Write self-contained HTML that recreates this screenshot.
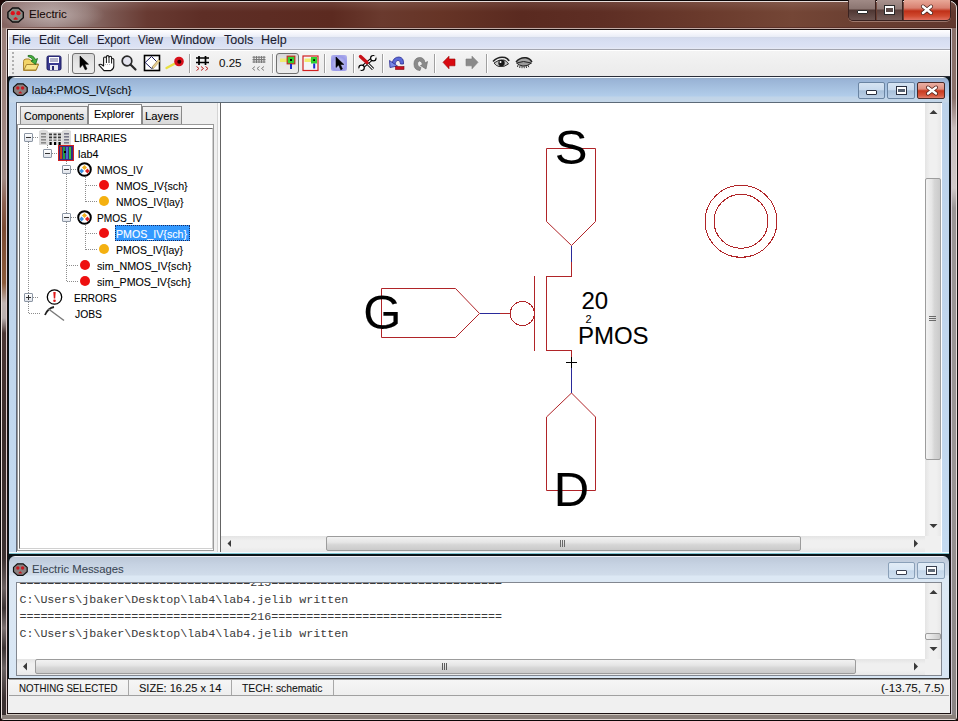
<!DOCTYPE html>
<html><head><meta charset="utf-8">
<style>
*{margin:0;padding:0;box-sizing:border-box}
html,body{width:958px;height:721px;overflow:hidden;background:#1e0806;font-family:"Liberation Sans",sans-serif;font-size:12px;color:#000}
.a{position:absolute}
.t{position:absolute;white-space:nowrap;line-height:1;-webkit-text-stroke:.08px currentColor}
svg{position:absolute;overflow:visible}
.menu{top:34.2px;font-size:12px;color:#1c1c30;transform-origin:0 0}
.sep{position:absolute;width:1px;background:#a0a0a0;border-right:1px solid #fff;width:2px}
.tb{font-size:11px;color:#000}
.tree{position:absolute;white-space:nowrap;line-height:1;-webkit-text-stroke:.08px currentColor;font-size:11px;color:#000;transform-origin:0 0}
.mono{font-family:"Liberation Mono",monospace;font-size:11.67px;color:#3a3a3a;position:absolute;white-space:pre;line-height:1}
.st{position:absolute;white-space:nowrap;line-height:1;-webkit-text-stroke:.08px currentColor;font-size:11px;color:#111;transform-origin:0 0}
</style></head><body>
<!-- window frame -->
<div class="a" style="left:0;top:0;width:958px;height:721px;border-radius:8px 8px 4px 4px;background:#9a8e8a;border:1px solid #0a0606"></div>
<div class="a" style="left:1px;top:1px;width:956px;height:719px;border-radius:7px 7px 3px 3px;border:1px solid rgba(240,228,226,.9)"></div>
<div class="a" style="left:2px;top:2px;width:954px;height:26px;border-radius:6px 6px 0 0;background:radial-gradient(ellipse 55px 16px at 48px 13px,rgba(200,188,186,.75),rgba(200,188,186,0)),linear-gradient(90deg,#84625e 0,#8e7270 20px,#98807e 50px,#8a6e6a 85px,#7a5650 110px,#683a32 145px,#5e2e26 200px,#5c2a20 330px,#6a3a2e 380px,#663426 440px,#5a2a20 520px,#5e2e24 600px,#6a3a2c 700px,#744636 790px,#6c4032 850px,#62382e 954px)"></div>
<div class="a" style="left:2px;top:2px;width:954px;height:10px;border-radius:6px 6px 0 0;background:linear-gradient(rgba(255,255,255,.10),rgba(255,255,255,0))"></div>
<div class="a" style="left:2px;top:27px;width:954px;height:1px;background:linear-gradient(90deg,#8a6a64,#5a3028 150px,#5a3028 954px)"></div>
<div class="a" style="left:2px;top:28px;width:5px;height:690px;background:linear-gradient(#9a807a 0,#a08a84 150px,#8a6050 175px,#7a4a32 200px,#8a5a3a 255px,#c0b4b2 275px,#b8aeae 290px,#4a3634 305px,#3a2c2a 400px,#3a3030 530px,#6a6060 560px,#3a3232 580px,#7a7070 600px,#3a3232 620px,#6a6262 640px,#3a3030 670px,#3a3030 690px)"></div>
<div class="a" style="left:6px;top:28px;width:1px;height:687px;background:#dccccc"></div>
<div class="a" style="left:951px;top:28px;width:1px;height:687px;background:#d0c8d4"></div>
<div class="a" style="left:952px;top:28px;width:4px;height:690px;background:linear-gradient(#8a706a 0,#8a706a 70px,#c8bcbc 100px,#d0c8c8 160px,#9a9494 180px,#9a9494 450px,#8a8484 690px)"></div>
<div class="a" style="left:2px;top:715px;width:954px;height:4px;background:#8a807a"></div>
<div class="a" style="left:6px;top:714px;width:946px;height:1px;background:#d0c8c0"></div>
<div class="a" style="left:6px;top:28px;width:946px;height:1px;background:#c4aca6"></div>
<!-- app icon -->
<svg style="left:7px;top:7px" width="18" height="16" viewBox="0 0 18 16">
<path d="M5.5 1h6l4.8 4.2v5.6L11.5 15h-6L0.9 10.8V5.2z" fill="#8a8a84" stroke="#111" stroke-width="1.4" stroke-linejoin="round"/>
<circle cx="5.8" cy="6.2" r="2.1" fill="#e0101a"/><circle cx="11.4" cy="6.2" r="2.1" fill="#e0101a"/>
<path d="M6.8 12.2 Q8.6 8.8 10.4 12.2z" fill="#e0101a" stroke="#e0101a" stroke-width="1"/>
</svg>
<div class="t" style="left:29.4px;top:8.6px;font-size:11.3px;color:#180a08;transform:scaleX(1.02);transform-origin:0 0">Electric</div>
<!-- caption buttons -->
<div class="a" style="left:848px;top:0px;width:103px;height:21px;border-radius:0 0 5px 5px;border:1px solid #3a2220;border-top:none;overflow:hidden;box-shadow:0 1px 0 rgba(255,230,220,.35)">
  <div class="a" style="left:0;top:0;width:27px;height:20px;background:linear-gradient(#a08a86 0,#8a7470 45%,#4e3632 50%,#6c5450 100%);border-right:1px solid #3a2220"></div>
  <div class="a" style="left:28px;top:0;width:26px;height:20px;background:linear-gradient(#a8928e 0,#907a76 45%,#5a403c 50%,#765e5a 100%);border-right:1px solid #3a2220"></div>
  <div class="a" style="left:55px;top:0;width:48px;height:20px;background:linear-gradient(#e8a898 0,#d88070 40%,#c03018 55%,#d04a30 80%,#e07060 100%)"></div>
</div>
<div class="a" style="left:857px;top:10px;width:11px;height:4px;background:#fff;border:1px solid #2a2a2a;border-radius:1px"></div>
<div class="a" style="left:884px;top:5px;width:11px;height:10px;background:#fff;border:1px solid #2a2a2a"></div>
<div class="a" style="left:886px;top:8px;width:7px;height:4px;background:#5a4a48"></div>
<svg style="left:921px;top:5px" width="12" height="10" viewBox="0 0 12 10"><path d="M2 1.5 L10 8 M10 1.5 L2 8" stroke="#3a1a14" stroke-width="4" stroke-linecap="round"/><path d="M2 1.5 L10 8 M10 1.5 L2 8" stroke="#fff" stroke-width="2.6" stroke-linecap="round"/></svg>

<!-- client -->
<div class="a" style="left:7px;top:29px;width:944px;height:685px;background:#f0f0f0;border:1px solid #1a1010"></div>
<!-- menubar -->
<div class="a" style="left:8px;top:30px;width:942px;height:20px;background:linear-gradient(#ffffff 0,#f4f5fb 4px,#e8ecf6 7px,#d2d8e6 7px,#d4dbee 8px,#d8dff2 12px,#dce2f4 17px,#e6e9f4 19px);border-bottom:1px solid #a4a6b0;border-left:1px solid #fff"></div>
<div class="t menu" style="left:11.7px;transform:scaleX(0.972)">File</div>
<div class="t menu" style="left:38.5px;transform:scaleX(1.01)">Edit</div>
<div class="t menu" style="left:68.0px;transform:scaleX(0.974)">Cell</div>
<div class="t menu" style="left:96.9px;transform:scaleX(0.949)">Export</div>
<div class="t menu" style="left:138.1px;transform:scaleX(0.961)">View</div>
<div class="t menu" style="left:171.2px;transform:scaleX(1.031)">Window</div>
<div class="t menu" style="left:224.2px;transform:scaleX(1.044)">Tools</div>
<div class="t menu" style="left:260.5px;transform:scaleX(1.039)">Help</div>
<!-- toolbar -->
<div class="a" style="left:8px;top:50px;width:942px;height:27px;background:linear-gradient(#f4f4f4,#efefef 50%,#ebebeb);border-bottom:1px solid #2a2e38;border-left:1px solid #fff"></div>
<div class="a" style="left:9px;top:50px;width:941px;height:1px;background:#fff"></div>
<!-- grip -->
<div class="a" style="left:12px;top:52px;width:2px;height:22px;background:repeating-linear-gradient(#b0b0b0 0 2px,transparent 2px 4px)"></div>
<!-- open folder -->
<svg style="left:22px;top:54px" width="18" height="18" viewBox="0 0 18 18">
<path d="M1.5 7.5 Q1.5 5 4 5 L7 5 L9 6.5 L13 6.5 L13 10 L16.5 10 L14 16.5 L1.5 16.5z" fill="#f2d468" stroke="#a88432" stroke-width="1"/>
<path d="M2 16 L4.5 10.5 L16.5 10.5 L14 16z" fill="#f8e488" stroke="#a88432" stroke-width="1"/>
<path d="M6 1.5 Q11 0.5 13.5 5.5 L15.5 4.5 L13.5 10.5 L9 7 L11 6.3 Q9.5 3 6 2.5z" fill="#48b040" stroke="#1e6a1e" stroke-width=".8"/>
</svg>
<!-- save -->
<svg style="left:46px;top:55px" width="16" height="16" viewBox="0 0 16 16">
<rect x="1" y="1" width="14" height="14" rx="1.5" fill="#3a3a90" stroke="#1a1a60"/>
<rect x="3" y="2" width="10" height="6" fill="#fff"/><rect x="4" y="3.5" width="8" height="1" fill="#6a6a9a"/><rect x="4" y="5.5" width="8" height="1" fill="#6a6a9a"/>
<rect x="4" y="10" width="8" height="5" fill="#e8e8f0"/><rect x="6" y="11" width="2" height="4" fill="#2a2a70"/>
</svg>
<div class="sep" style="left:68px;top:54px;height:19px"></div>
<!-- pressed select button -->
<div class="a" style="left:72px;top:53px;width:23px;height:21px;border:1px solid #707070;border-radius:3px;background:linear-gradient(#d8d8d8,#e6e6e6 50%,#ececec)"></div>
<svg style="left:79px;top:55px" width="11" height="16" viewBox="0 0 11 16">
<path d="M1 1 L1 12.5 L3.8 9.8 L6.2 14.8 L8 14 L5.8 9.2 L9.5 9.2z" fill="#000" stroke="#000" stroke-width=".6"/>
</svg>
<!-- hand -->
<svg style="left:98px;top:55px" width="17" height="17" viewBox="0 0 17 17">
<path d="M0.8 9.8 Q2.2 8.6 4.2 10 L5.6 11 V3.6 Q5.6 2 7 2 Q8.4 2 8.4 3.6 V1.8 Q8.4 0.6 9.7 0.6 Q11 0.6 11 1.8 V2.4 Q11 1.3 12.3 1.3 Q13.6 1.3 13.6 2.4 V4.6 Q13.6 3.5 14.7 3.5 Q15.8 3.5 15.8 4.6 V11 Q15.8 14.2 12.8 15.6 H6 Z" fill="#fff" stroke="#111" stroke-width="1.05" stroke-linejoin="round"/>
<path d="M8.4 3.6 V8 M11 2.4 V8 M13.6 4.6 V8.5" stroke="#111" stroke-width="1"/>
<path d="M7 9.5 H13" stroke="#aaa" stroke-width=".8" stroke-dasharray="1 1"/>
</svg>
<!-- magnifier -->
<svg style="left:120px;top:54px" width="17" height="17" viewBox="0 0 17 17">
<circle cx="7" cy="7" r="4.8" fill="#e4e4ee" stroke="#2a2a2a" stroke-width="1.7"/>
<path d="M10.5 10.5 L15.5 15.5" stroke="#2a2a2a" stroke-width="2.2" stroke-linecap="round"/>
</svg>
<!-- box/pencil -->
<svg style="left:143px;top:54px" width="18" height="18" viewBox="0 0 18 18">
<rect x="1.5" y="1.5" width="15" height="15" fill="#fff" stroke="#000" stroke-width="1.6"/>
<path d="M2.2 8.5 L8.5 2.5 L14 8 L8.5 14.5z" fill="none" stroke="#1a1a5a" stroke-width="1"/>
<path d="M9 13 L15.5 5.5 L17 7 L10.5 14.5z" fill="#e8d090" stroke="#b09860" stroke-width=".6"/>
<path d="M9 13 L10.5 14.5 L8.2 15.2z" fill="#707070"/>
</svg>
<!-- probe -->
<svg style="left:165px;top:55px" width="20" height="15" viewBox="0 0 20 15">
<path d="M1.5 13 L10 8.5" stroke="#e8e040" stroke-width="2.4" stroke-linecap="round"/>
<circle cx="14" cy="6.5" r="4.8" fill="#d8101a"/><circle cx="14.3" cy="6.8" r="2" fill="#300"/>
</svg>
<div class="sep" style="left:189px;top:54px;height:19px"></div>
<!-- grid -->
<svg style="left:195px;top:55px" width="16" height="17" viewBox="0 0 16 17">
<path d="M4 1 V10 M10.5 1 V10 M1 3 H14 M1 7.5 H14" stroke="#000" stroke-width="1.7"/>
<path d="M1.5 11.5 L4 13.5 L1.5 15.5 M6 11.5 L8.5 13.5 L6 15.5 M10.5 11.5 L13 13.5 L10.5 15.5" fill="none" stroke="#c02020" stroke-width="1"/>
</svg>
<div class="t" style="left:219.2px;top:57.8px;font-size:11px;color:#111;transform:scaleX(1.053);transform-origin:0 0">0.25</div>
<svg style="left:251px;top:55px" width="16" height="17" viewBox="0 0 16 17">
<path d="M3 1 V8 M5.5 1 V8 M8 1 V8 M10.5 1 V8 M13 1 V8 M1.5 2.2 H14.5 M1.5 4.6 H14.5 M1.5 7 H14.5" stroke="#7a7a7a" stroke-width="1.1"/>
<path d="M4 11.5 L1.5 13.5 L4 15.5 M8.5 11.5 L6 13.5 L8.5 15.5 M13 11.5 L10.5 13.5 L13 15.5" fill="none" stroke="#808080" stroke-width="1"/>
</svg>
<div class="sep" style="left:272px;top:54px;height:19px"></div>
<!-- pressed port button -->
<div class="a" style="left:276px;top:53px;width:23px;height:21px;border:1px solid #707070;border-radius:3px;background:linear-gradient(#d8d8d8,#e6e6e6 50%,#ececec)"></div>
<svg style="left:279px;top:55px" width="18" height="16" viewBox="0 0 18 16">
<rect x="1" y="3.5" width="8" height="3.5" fill="#f0ec70"/>
<rect x="8.2" y="1.2" width="7.6" height="7.6" fill="#30d030" stroke="#c03020" stroke-width="1.2"/>
<rect x="11" y="4" width="2" height="2" fill="#000"/>
<rect x="11" y="9" width="2" height="5" fill="#1a2ad0"/>
</svg>
<svg style="left:302px;top:55px" width="17" height="16" viewBox="0 0 17 16">
<rect x="1" y="1" width="15" height="14.5" fill="#f4f4f8" stroke="#d02020" stroke-width="1.2"/>
<rect x="2.5" y="3.5" width="7" height="3.5" fill="#f0ec70"/>
<rect x="9" y="2" width="6" height="6.5" fill="#30d030"/>
<rect x="11.2" y="4.2" width="1.8" height="1.8" fill="#000"/>
<rect x="11.2" y="8.5" width="2" height="5" fill="#1a2ad0"/>
</svg>
<div class="sep" style="left:324px;top:54px;height:19px"></div>
<!-- highlighted select -->
<div class="a" style="left:331px;top:55px;width:16px;height:16px;background:radial-gradient(circle at 50% 55%,#d8d8f8 0,#9a9ae8 60%,#b8b8ee 100%);border-radius:2px"></div>
<svg style="left:335px;top:56px" width="10" height="15" viewBox="0 0 10 15">
<path d="M1 1 L1 11.5 L3.6 9 L5.8 13.8 L7.4 13 L5.4 8.4 L8.8 8.4z" fill="#000" stroke="#000" stroke-width=".6"/>
</svg>
<div class="sep" style="left:353px;top:54px;height:19px"></div>
<!-- tools -->
<svg style="left:358px;top:55px" width="19" height="16" viewBox="0 0 19 16">
<path d="M14.5 3.5 L4.5 12" stroke="#000" stroke-width="3.4" stroke-linecap="round"/>
<path d="M14.5 3.5 L4.5 12" stroke="#fff" stroke-width="1.4" stroke-linecap="round"/>
<circle cx="15.3" cy="3.2" r="2.7" fill="#fff" stroke="#000" stroke-width="1.2"/>
<circle cx="3.6" cy="12.8" r="2.7" fill="#fff" stroke="#000" stroke-width="1.2"/>
<path d="M16.5 0.5 L18.5 2.5" stroke="#efefef" stroke-width="2"/>
<path d="M0.5 13.5 L2.5 15.5" stroke="#efefef" stroke-width="2"/>
<path d="M9.5 8.5 L15 14" stroke="#000" stroke-width="3"/>
<path d="M9.8 8.8 L14.8 13.8" stroke="#fff" stroke-width="1.2"/>
<path d="M2.5 1.5 L9 7.5" stroke="#c81018" stroke-width="3.4" stroke-linecap="round"/>
</svg>
<div class="sep" style="left:382px;top:54px;height:19px"></div>
<!-- undo -->
<svg style="left:388px;top:55px" width="18" height="16" viewBox="0 0 18 16">
<path d="M4 9 Q5 2 11 2 Q16 2.5 15.5 9 L12.5 9 Q12.5 5.5 10 5.3 Q7.5 5.3 7 9.5z" fill="#5a6ad8" stroke="#2a2a90" stroke-width=".8"/>
<path d="M1.5 5.5 L9.5 11 L2 12.5z" fill="#7a8ae8" stroke="#2a2a90" stroke-width=".8"/>
<rect x="7.5" y="11.5" width="8.5" height="3" fill="#c81020" stroke="#7a0a10" stroke-width=".6"/>
</svg>
<!-- redo gray -->
<svg style="left:412px;top:55px" width="17" height="17" viewBox="0 0 17 17">
<path d="M2 9 Q2 3 7.5 2.5 Q12.5 2.5 13 8 L15.5 6.5 L14 14 L8.5 10.5 L10.5 9.5 Q10 6 7.5 6 Q5.5 6 5.5 9 Q5.5 12 9 12.5 L8 15.5 Q2 15 2 9z" fill="#8a8a8a" stroke="#707070" stroke-width=".7"/>
</svg>
<div class="sep" style="left:434px;top:54px;height:19px"></div>
<!-- arrows -->
<svg style="left:442px;top:55px" width="14" height="15" viewBox="0 0 14 15">
<path d="M1 7.3 L7 1.2 L7 4 L13 4 L13 10.8 L7 10.8 L7 13.8z" fill="#d80a10" stroke="#900" stroke-width=".6"/>
</svg>
<svg style="left:465px;top:55px" width="14" height="15" viewBox="0 0 14 15">
<path d="M13 7.3 L7 1.2 L7 4 L1 4 L1 10.8 L7 10.8 L7 13.8z" fill="#8a8a8a" stroke="#7a7a7a" stroke-width=".6"/>
</svg>
<div class="sep" style="left:486px;top:54px;height:19px"></div>
<!-- eyes -->
<svg style="left:492px;top:56px" width="18" height="13" viewBox="0 0 18 13">
<path d="M1 5.5 Q6 0 13 1.5 Q16 2.5 17 5" fill="none" stroke="#222" stroke-width="1.6"/>
<path d="M2 7 Q7 3 12 4 Q15 5 16.5 8 Q12 11.5 7 10.5 Q4 10 2 7z" fill="#c8c8c8" stroke="#333" stroke-width="1"/>
<circle cx="9.5" cy="7" r="3.2" fill="#1a1a1a"/><circle cx="8.5" cy="6" r="1" fill="#fff"/>
</svg>
<svg style="left:515px;top:56px" width="18" height="13" viewBox="0 0 18 13">
<path d="M1 6 Q5 1 11 1.8 Q15 2.5 17 6" fill="#a8a8a8" stroke="#222" stroke-width="1.4"/>
<path d="M1.5 7 Q8 4 16.5 7 Q12 10.5 8 10 Q4 9.5 1.5 7z" fill="#9a9a9a" stroke="#222" stroke-width="1"/>
<path d="M3 9 L2.5 11 M5 9.8 L4.7 12 M7 10 L7 12.2 M9 10 L9.3 12.2 M11 9.8 L11.6 12 M13 9.2 L13.8 11.2" stroke="#222" stroke-width=".9"/>
</svg>
<!-- MDI desktop bg -->
<div class="a" style="left:8px;top:77px;width:942px;height:602px;background:#08141a"></div>
<!-- MDI child window -->
<div class="a" style="left:9px;top:77px;width:940px;height:477px;border-radius:6px 6px 0 0;background:linear-gradient(#f4faff 0,#f4faff 1px,#98aec8 1px,#9ab4d6 3px,#b2cdea 19px,#c0d4e8 20px,#c4d6e8 25px,#bcd2ea 26px,#c4daf0 100%)"></div>
<svg style="left:13px;top:83px" width="15" height="13" viewBox="0 0 15 13">
<path d="M4.5 0.8h5.5l4.2 3.6v4.4l-4.2 3.6h-5.5l-4-3.6v-4.4z" fill="#8a8080" stroke="#111" stroke-width="1.2" stroke-linejoin="round"/>
<circle cx="4.8" cy="5" r="1.7" fill="#c81820"/><circle cx="9.6" cy="5" r="1.7" fill="#c81820"/>
<path d="M5.8 10 Q7.2 7.3 8.6 10z" fill="#c81820" stroke="#c81820" stroke-width=".8"/>
</svg>
<div class="t" style="left:31.8px;top:85px;font-size:11.3px;color:#101010">lab4:PMOS_IV{sch}</div>
<!-- mdi buttons -->
<div class="a" style="left:858px;top:82px;width:27px;height:17px;border:1px solid #6a84a2;border-radius:2px;background:linear-gradient(#d6e4f2 0,#c8daee 45%,#a8c0da 52%,#bcd0e6 100%)"></div>
<div class="a" style="left:866px;top:90px;width:11px;height:5px;background:#fff;border:1px solid #2a3040;border-radius:1px"></div>
<div class="a" style="left:887px;top:82px;width:28px;height:17px;border:1px solid #6a84a2;border-radius:2px;background:linear-gradient(#d6e4f2 0,#c8daee 45%,#a8c0da 52%,#bcd0e6 100%)"></div>
<div class="a" style="left:896px;top:86px;width:11px;height:9px;background:#fff;border:1px solid #2a3040"></div>
<div class="a" style="left:898px;top:89px;width:7px;height:3px;background:#556070"></div>
<div class="a" style="left:917px;top:82px;width:28px;height:17px;border:1px solid #4a2a28;border-radius:2px;background:linear-gradient(#eab0a4 0,#e09080 40%,#c8381e 52%,#d85a40 85%,#e08070 100%)"></div>
<svg style="left:926px;top:86px" width="12" height="9" viewBox="0 0 12 9"><path d="M2 1.5 L10 7.5 M10 1.5 L2 7.5" stroke="#4a1a14" stroke-width="4" stroke-linecap="round"/><path d="M2 1.5 L10 7.5 M10 1.5 L2 7.5" stroke="#fff" stroke-width="2.4" stroke-linecap="round"/></svg>

<!-- content area -->
<div class="a" style="left:16px;top:102px;width:926px;height:450px;background:#f0f0f0;border-top:1px solid #5c6a78;border-left:1px solid #606878"></div><div class="a" style="left:17px;top:103px;width:1px;height:449px;background:#fff"></div>
<!-- tabs -->
<div class="a" style="left:20px;top:106px;width:68px;height:19px;border:1px solid #8a8a8a;border-bottom:none;background:linear-gradient(#f2f2f2,#e4e4e4 50%,#d8d8d8)"></div>
<div class="a" style="left:142px;top:106px;width:40px;height:19px;border:1px solid #8a8a8a;border-bottom:none;background:linear-gradient(#f2f2f2,#e4e4e4 50%,#d8d8d8)"></div>
<div class="a" style="left:88px;top:104px;width:54px;height:22px;border:1px solid #8a8a8a;border-bottom:none;background:#fff"></div>
<div class="tree" style="left:24.4px;top:111px;font-size:11px;transform:scaleX(.961)">Components</div>
<div class="tree" style="left:93.8px;top:109px;font-size:11px;transform:scaleX(.985)">Explorer</div>
<div class="tree" style="left:145.1px;top:111px;font-size:11px;transform:scaleX(1.022)">Layers</div>
<!-- tree box -->
<div class="a" style="left:17px;top:124px;width:197px;height:427px;border:1px solid #9a9a9a;background:#fff"></div>
<div class="a" style="left:19px;top:128px;width:194px;height:421px;border:1px solid #6a6a6a;border-right-color:#d0d0d0;border-bottom-color:#d0d0d0;background:#fff"></div>
<div class="a" style="left:217px;top:103px;width:1px;height:449px;background:#d4d4d4"></div><div class="a" style="left:218px;top:103px;width:2px;height:449px;background:#fafafa"></div>
<!-- tree lines -->
<svg style="left:0;top:0" width="220" height="330" viewBox="0 0 220 330">
<g stroke="#8c8c8c" stroke-width="1" stroke-dasharray="1 1" fill="none" shape-rendering="crispEdges">
<path d="M28.5 142 V314 M33 137.5 H38 M33 297.5 H38 M29 313.5 H40"/>
<path d="M47.5 145 V149 M52 153.5 H57"/>
<path d="M66.5 161 V165 M66.5 174 V213 M66.5 222 V282 M71 169.5 H77 M71 217.5 H77 M67 265.5 H79 M67 281.5 H79"/>
<path d="M85.5 177 V202 M86 185.5 H98 M86 201.5 H98"/>
<path d="M85.5 225 V250 M86 233.5 H98 M86 249.5 H98"/>
</g>
</svg>
<!-- expanders -->
<div class="a" style="left:24px;top:133px;width:9px;height:9px;border:1px solid #8c96a4;border-radius:1px;background:linear-gradient(#fff,#dfe3ea)"></div>
<div class="a" style="left:26px;top:137px;width:5px;height:1px;background:#333"></div>
<div class="a" style="left:43px;top:149px;width:9px;height:9px;border:1px solid #8c96a4;border-radius:1px;background:linear-gradient(#fff,#dfe3ea)"></div>
<div class="a" style="left:45px;top:153px;width:5px;height:1px;background:#333"></div>
<div class="a" style="left:62px;top:165px;width:9px;height:9px;border:1px solid #8c96a4;border-radius:1px;background:linear-gradient(#fff,#dfe3ea)"></div>
<div class="a" style="left:64px;top:169px;width:5px;height:1px;background:#333"></div>
<div class="a" style="left:62px;top:213px;width:9px;height:9px;border:1px solid #8c96a4;border-radius:1px;background:linear-gradient(#fff,#dfe3ea)"></div>
<div class="a" style="left:64px;top:217px;width:5px;height:1px;background:#333"></div>
<div class="a" style="left:24px;top:293px;width:9px;height:9px;border:1px solid #8c96a4;border-radius:1px;background:linear-gradient(#fff,#dfe3ea)"></div>
<div class="a" style="left:26px;top:297px;width:5px;height:1px;background:#333"></div>
<div class="a" style="left:28px;top:295px;width:1px;height:5px;background:#333"></div>
<!-- icons -->
<svg style="left:38px;top:128px" width="34" height="18" viewBox="0 0 34 18">
<path d="M1 3 Q5.5 0.5 10 3 V17 H1z" fill="#dcdcdc"/><path d="M24 3 Q28.5 0.5 33 3 V17 H24z" fill="#dcdcdc"/>
<rect x="10" y="4" width="14" height="13" fill="#e4e4e4"/>
<g fill="#8a8a8a"><rect x="3" y="5" width="5" height="1.6"/><rect x="3" y="8" width="5" height="1.6"/><rect x="3" y="11" width="5" height="1.6"/><rect x="3" y="14" width="5" height="1.6"/>
<rect x="26" y="5" width="5" height="1.6" fill="#7a7a8a"/><rect x="26" y="8" width="5" height="1.6" fill="#7a7a8a"/><rect x="26" y="11" width="5" height="1.6" fill="#7a7a8a"/><rect x="26" y="14" width="5" height="1.6" fill="#7a7a8a"/></g>
<g fill="#3a3a3a"><rect x="11" y="5.5" width="3" height="1.8"/><rect x="15.5" y="5.5" width="3" height="1.8"/><rect x="20" y="5.5" width="3" height="1.8"/>
<rect x="11" y="8.5" width="3" height="1.8"/><rect x="15.5" y="8.5" width="3" height="1.8"/><rect x="20" y="8.5" width="3" height="1.8"/>
<rect x="11" y="11.5" width="3" height="1.4" fill="#6a6a6a"/><rect x="15.5" y="11.5" width="3" height="1.4" fill="#6a6a6a"/><rect x="20" y="11.5" width="3" height="1.4" fill="#6a6a6a"/></g>
<g fill="#000"><rect x="11.5" y="14" width="2.2" height="3"/><rect x="16" y="14" width="2.2" height="3"/><rect x="20.5" y="14" width="2.2" height="3"/></g>
</svg>
<svg style="left:58px;top:145px" width="16" height="16" viewBox="0 0 16 16">
<rect x="0.5" y="0.5" width="15" height="15" fill="#3a2a80" stroke="#d02020" stroke-width="1"/>
<rect x="2" y="2" width="2" height="12" fill="#c84020"/><rect x="5" y="2" width="2" height="12" fill="#20a040"/><rect x="8" y="2" width="2" height="12" fill="#4a70d0"/><rect x="11" y="2" width="2" height="12" fill="#30c040"/>
<rect x="6" y="6" width="2" height="2" fill="#000"/>
</svg>
<svg style="left:77px;top:162px" width="15" height="15" viewBox="0 0 15 15">
<circle cx="7.5" cy="7.5" r="6.3" fill="#fff" stroke="#000" stroke-width="2"/>
<path d="M7.5 3 L10 5.5 L7.5 8 L5 5.5z" fill="#f0b020"/><path d="M4.5 6.5 L7 9 L4.5 11.5 L2.5 9z" fill="#3a90e0"/><path d="M10.5 6.5 L12.5 9 L10.5 11.5 L8 9z" fill="#e02020"/>
</svg>
<svg style="left:77px;top:210px" width="15" height="15" viewBox="0 0 15 15">
<circle cx="7.5" cy="7.5" r="6.3" fill="#fff" stroke="#000" stroke-width="2"/>
<path d="M7.5 3 L10 5.5 L7.5 8 L5 5.5z" fill="#f0b020"/><path d="M4.5 6.5 L7 9 L4.5 11.5 L2.5 9z" fill="#3a90e0"/><path d="M10.5 6.5 L12.5 9 L10.5 11.5 L8 9z" fill="#e02020"/>
</svg>
<div class="a" style="left:99px;top:180px;width:10px;height:10px;border-radius:50%;background:#ee1010"></div>
<div class="a" style="left:99px;top:196px;width:10px;height:10px;border-radius:50%;background:#f4b010"></div>
<div class="a" style="left:99px;top:228px;width:10px;height:10px;border-radius:50%;background:#ee1010"></div>
<div class="a" style="left:99px;top:244px;width:10px;height:10px;border-radius:50%;background:#f4b010"></div>
<div class="a" style="left:80px;top:260px;width:10px;height:10px;border-radius:50%;background:#ee1010"></div>
<div class="a" style="left:80px;top:276px;width:10px;height:10px;border-radius:50%;background:#ee1010"></div>
<svg style="left:46px;top:289px" width="17" height="16" viewBox="0 0 17 16">
<circle cx="8.5" cy="8" r="7.2" fill="#fff" stroke="#000" stroke-width="1.3"/>
<path d="M7.3 3 H9.7 L9.2 9.5 H7.8z" fill="#e01818"/><circle cx="8.5" cy="11.8" r="1.3" fill="#e01818"/>
</svg>
<svg style="left:43px;top:305px" width="24" height="17" viewBox="0 0 24 17">
<path d="M2 10 Q5 3 11 2" fill="none" stroke="#222" stroke-width="1.8"/>
<path d="M5.5 4 L21 15.5" stroke="#7a7a7a" stroke-width="1.5"/>
</svg>
<!-- labels -->
<div class="tree" style="left:74.4px;top:132.9px;transform:scaleX(0.918)">LIBRARIES</div>
<div class="tree" style="left:77.7px;top:148.9px;transform:scaleX(0.98)">lab4</div>
<div class="tree" style="left:97.0px;top:164.9px;transform:scaleX(0.922)">NMOS_IV</div>
<div class="tree" style="left:115.9px;top:180.9px;transform:scaleX(0.968)">NMOS_IV{sch}</div>
<div class="tree" style="left:115.9px;top:196.9px;transform:scaleX(0.953)">NMOS_IV{lay}</div>
<div class="tree" style="left:97.0px;top:212.9px;transform:scaleX(0.922)">PMOS_IV</div>
<div class="a" style="left:115px;top:225px;width:75px;height:16px;background:#3399ff;border:1px dotted #1a2a60"></div>
<div class="tree" style="left:115.9px;top:228.9px;color:#fff;transform:scaleX(0.968)">PMOS_IV{sch}</div>
<div class="tree" style="left:115.9px;top:244.9px;transform:scaleX(0.953)">PMOS_IV{lay}</div>
<div class="tree" style="left:96.9px;top:260.9px;transform:scaleX(0.97)">sim_NMOS_IV{sch}</div>
<div class="tree" style="left:96.9px;top:276.9px;transform:scaleX(0.97)">sim_PMOS_IV{sch}</div>
<div class="tree" style="left:74.4px;top:292.9px;transform:scaleX(0.906)">ERRORS</div>
<div class="tree" style="left:75.0px;top:308.9px;transform:scaleX(0.939)">JOBS</div>
<!-- canvas -->
<div class="a" style="left:220px;top:102px;width:722px;height:450px;background:#fff;border-left:1px solid #646464;border-top:1px solid #5c6a78"></div>
<!-- v scrollbar -->
<div class="a" style="left:925px;top:103px;width:16px;height:433px;background:linear-gradient(90deg,#e4e4e4,#f0f0f0 30%,#f0f0f0 70%,#e8e8e8)"></div>
<svg style="left:929px;top:109px" width="9" height="6" viewBox="0 0 9 6"><path d="M0.5 5 L4.5 1 L8.5 5z" fill="#3a3a3a"/></svg>
<svg style="left:929px;top:523px" width="9" height="6" viewBox="0 0 9 6"><path d="M0.5 1 L4.5 5 L8.5 1z" fill="#3a3a3a"/></svg>
<div class="a" style="left:925px;top:178px;width:16px;height:282px;border:1px solid #9c9c9c;border-radius:2px;background:linear-gradient(90deg,#f2f2f2,#e6e6e6 40%,#d6d6d6 60%,#cacaca)"></div>
<div class="a" style="left:929px;top:316px;width:7px;height:5px;background:repeating-linear-gradient(#6a6a6a 0 1px,transparent 1px 2px)"></div>
<!-- h scrollbar -->
<div class="a" style="left:221px;top:536px;width:704px;height:16px;background:linear-gradient(#e4e4e4,#f0f0f0 30%,#f0f0f0 70%,#e8e8e8)"></div>
<div class="a" style="left:925px;top:536px;width:16px;height:16px;background:#f0f0f0"></div>
<svg style="left:226px;top:539px" width="6" height="9" viewBox="0 0 6 9"><path d="M5 1 L1.5 4.5 L5 8z" fill="#3a3a3a"/></svg>
<svg style="left:913px;top:539px" width="6" height="9" viewBox="0 0 6 9"><path d="M1 0.5 L5 4.5 L1 8.5z" fill="#3a3a3a"/></svg>
<div class="a" style="left:326px;top:536px;width:475px;height:15px;border:1px solid #9c9c9c;border-radius:2px;background:linear-gradient(#f2f2f2,#e6e6e6 40%,#d6d6d6 60%,#cacaca)"></div>
<div class="a" style="left:560px;top:540px;width:5px;height:7px;background:repeating-linear-gradient(90deg,#6a6a6a 0 1px,transparent 1px 2px)"></div>
<!-- MDI bottom -->
<div class="a" style="left:9px;top:552px;width:940px;height:1px;background:#f4faff"></div>
<div class="a" style="left:9px;top:553px;width:940px;height:1px;background:#80c4d0"></div>
<div class="a" style="left:9px;top:554px;width:941px;height:2px;background:#0a1418"></div>

<!-- schematic -->
<svg style="left:0;top:0" width="958" height="560" viewBox="0 0 958 560">
<g fill="none" stroke="#b02428" stroke-width="1">
<path d="M546.5 148.5 H595.5 V221.5 L571.5 245.5 L546.5 221.5 V148.5"/>
<path d="M381.5 288.5 H455.5 L479.5 313.5 L455.5 337.5 H381.5z"/>
<path d="M571.5 393 L595.5 417 V490.5 H546.5 V417z"/>
</g>
<g fill="none" stroke="#b02428" stroke-width="1" shape-rendering="crispEdges">
<path d="M571.5 262 V276.5 H546.5 V350.5 H571.5 V362"/>
<path d="M500 313.5 H510.5"/>
<path d="M534.5 276 V351"/>
<circle cx="522.3" cy="313.5" r="12"/>
<circle cx="741" cy="221.3" r="36"/>
<circle cx="741" cy="221.3" r="27"/>
</g>
<g stroke="#2a2a9a" stroke-width="1" shape-rendering="crispEdges">
<path d="M571.5 246 V262"/>
<path d="M480 313.5 H500"/>
<path d="M571.5 362 V393"/>
</g>
<path d="M566 362.5 H577 M571.5 357 V368" stroke="#000" stroke-width="1"/>
</svg>
<div class="t" style="left:554.8px;top:123.2px;font-size:49px">S</div>
<div class="t" style="left:363.2px;top:288px;font-size:49px">G</div>
<div class="t" style="left:553.8px;top:465.1px;font-size:49px">D</div>
<div class="t" style="left:581.5px;top:288.7px;font-size:24px">20</div>
<div class="t" style="left:585.6px;top:314.2px;font-size:11px">2</div>
<div class="t" style="left:577.9px;top:324.4px;font-size:24px">PMOS</div>
<!-- messages window -->
<div class="a" style="left:9px;top:556px;width:940px;height:123px;border-radius:6px 6px 0 0;background:linear-gradient(#f0f0f8 0,#f0f0f8 1px,#bcc8d8 1px,#c6d2e2 8px,#d0dcea 19px,#dce8f4 20px,#dce8f4 26px,#d8e6f4 100%)"></div>
<svg style="left:13px;top:563px" width="15" height="13" viewBox="0 0 15 13">
<path d="M4.5 0.8h5.5l4.2 3.6v4.4l-4.2 3.6h-5.5l-4-3.6v-4.4z" fill="#8a8080" stroke="#111" stroke-width="1.2" stroke-linejoin="round"/>
<circle cx="4.8" cy="5" r="1.7" fill="#c81820"/><circle cx="9.6" cy="5" r="1.7" fill="#c81820"/>
<path d="M5.8 10 Q7.2 7.3 8.6 10z" fill="#c81820" stroke="#c81820" stroke-width=".8"/>
</svg>
<div class="t" style="left:32.1px;top:564px;font-size:11.3px;color:#3a4654;transform:scaleX(1.0);transform-origin:0 0">Electric Messages</div>
<div class="a" style="left:888px;top:562px;width:27px;height:17px;border:1px solid #8aa0b8;border-radius:2px;background:linear-gradient(#e2ecf6 0,#d8e6f4 45%,#c4d6ea 52%,#d0e0f0 100%)"></div>
<div class="a" style="left:896px;top:570px;width:11px;height:5px;background:#fff;border:1px solid #3a4050;border-radius:1px"></div>
<div class="a" style="left:917px;top:562px;width:28px;height:17px;border:1px solid #8aa0b8;border-radius:2px;background:linear-gradient(#e2ecf6 0,#d8e6f4 45%,#c4d6ea 52%,#d0e0f0 100%)"></div>
<div class="a" style="left:926px;top:566px;width:11px;height:9px;background:#fff;border:1px solid #3a4050"></div>
<div class="a" style="left:928px;top:569px;width:7px;height:3px;background:#606a78"></div>
<!-- text area -->
<div class="a" style="left:16px;top:582px;width:926px;height:94px;background:#fff;border:1px solid #828790;overflow:hidden">
 <div class="mono" style="left:2.4px;top:-5.3px">=================================215=================================</div>
 <div class="mono" style="left:2.4px;top:11.8px">C:\Users\jbaker\Desktop\lab4\lab4.jelib written</div>
 <div class="mono" style="left:2.4px;top:28.9px">=================================216=================================</div>
 <div class="mono" style="left:2.4px;top:46px">C:\Users\jbaker\Desktop\lab4\lab4.jelib written</div>
</div>
<!-- msg v scroll -->
<div class="a" style="left:925px;top:583px;width:16px;height:76px;background:linear-gradient(90deg,#e4e4e4,#f0f0f0 30%,#f0f0f0 70%,#e8e8e8)"></div>
<svg style="left:929px;top:589px" width="9" height="6" viewBox="0 0 9 6"><path d="M0.5 5 L4.5 1 L8.5 5z" fill="#3a3a3a"/></svg>
<svg style="left:929px;top:646px" width="9" height="6" viewBox="0 0 9 6"><path d="M0.5 1 L4.5 5 L8.5 1z" fill="#3a3a3a"/></svg>
<div class="a" style="left:925px;top:633px;width:16px;height:7px;border:1px solid #9c9c9c;border-radius:2px;background:linear-gradient(90deg,#f2f2f2,#e0e0e0 50%,#cacaca)"></div>
<!-- msg h scroll -->
<div class="a" style="left:17px;top:659px;width:908px;height:16px;background:linear-gradient(#e4e4e4,#f0f0f0 30%,#f0f0f0 70%,#e8e8e8)"></div>
<div class="a" style="left:925px;top:659px;width:16px;height:16px;background:#f0f0f0"></div>
<svg style="left:22px;top:662px" width="6" height="9" viewBox="0 0 6 9"><path d="M5 0.5 L1 4.5 L5 8.5z" fill="#3a3a3a"/></svg>
<svg style="left:913px;top:662px" width="6" height="9" viewBox="0 0 6 9"><path d="M1 0.5 L5 4.5 L1 8.5z" fill="#3a3a3a"/></svg>
<div class="a" style="left:35px;top:659px;width:821px;height:15px;border:1px solid #9c9c9c;border-radius:2px;background:linear-gradient(#f2f2f2,#e6e6e6 40%,#d6d6d6 60%,#cacaca)"></div>
<div class="a" style="left:442px;top:663px;width:5px;height:7px;background:repeating-linear-gradient(90deg,#5a5a5a 0 1px,transparent 1px 2px)"></div>

<!-- status bar -->
<div class="a" style="left:9px;top:678px;width:941px;height:35px;background:#f0f0f0;border-top:1px solid #3c3c3c"></div>
<div class="a" style="left:9px;top:679px;width:940px;height:17px;border-top:1px solid #a0a0a0;border-bottom:1px solid #a0a0a0;background:linear-gradient(#f6f6f6,#eeeeee)"></div>
<div class="a" style="left:128px;top:680px;width:1px;height:15px;background:#a8a8a8"></div>
<div class="a" style="left:231px;top:680px;width:1px;height:15px;background:#a8a8a8"></div>
<div class="a" style="left:333px;top:680px;width:1px;height:15px;background:#a8a8a8"></div>
<div class="st" style="left:19.0px;top:682.5px;transform:scaleX(0.881)">NOTHING SELECTED</div>
<div class="st" style="left:138.8px;top:682.5px;transform:scaleX(1.005)">SIZE: 16.25 x 14</div>
<div class="st" style="left:242.3px;top:682.5px;transform:scaleX(0.94)">TECH: schematic</div>
<div class="st" style="left:880.5px;top:682.5px;transform:scaleX(1.056)">(-13.75, 7.5)</div>
</body></html>
